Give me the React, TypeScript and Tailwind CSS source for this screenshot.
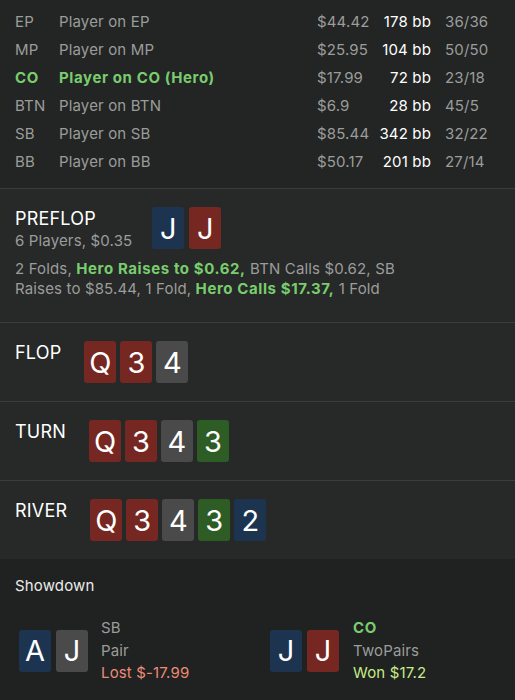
import React from "react";

type Suit = "b" | "r" | "g" | "k";
const suitBg: Record<Suit, string> = {
  b: "bg-[#1d3451]",
  r: "bg-[#762721]",
  g: "bg-[#2d5d25]",
  k: "bg-[#4a4a4a]",
};

function Card({ v, s }: { v: string; s: Suit }) {
  return (
    <div
      className={`w-[32px] h-[42px] rounded-[3px] flex items-center justify-center text-white text-[29px] leading-none tracking-normal ${suitBg[s]}`}
    >
      {v}
    </div>
  );
}

const players = [
  { pos: "EP", name: "Player on EP", price: "$44.42", bb: "178 bb", ratio: "36/36" },
  { pos: "MP", name: "Player on MP", price: "$25.95", bb: "104 bb", ratio: "50/50" },
  { pos: "CO", name: "Player on CO (Hero)", price: "$17.99", bb: "72 bb", ratio: "23/18", hero: true },
  { pos: "BTN", name: "Player on BTN", price: "$6.9", bb: "28 bb", ratio: "45/5" },
  { pos: "SB", name: "Player on SB", price: "$85.44", bb: "342 bb", ratio: "32/22" },
  { pos: "BB", name: "Player on BB", price: "$50.17", bb: "201 bb", ratio: "27/14" },
];

const heroCls = "text-[#79cd6e] font-bold tracking-[0.6px]";

function Street({ label, cards }: { label: string; cards: [string, Suit][] }) {
  return (
    <div className="border-t border-[#3a3d3b] bg-[#262927] px-[15px] pt-[18px] pb-[18px] flex items-start gap-[23px]">
      <div className="text-[18px] leading-[24px] text-white tracking-[0.2px]">{label}</div>
      <div className="flex gap-[4px]">
        {cards.map(([v, s], i) => (
          <Card key={i} v={v} s={s} />
        ))}
      </div>
    </div>
  );
}

export default function App() {
  return (
    <div
      className="w-[515px] h-[700px] overflow-hidden bg-[#1f2220] text-[15px] tracking-[0.15px]"
      style={{ fontFamily: "Inter, 'Noto Sans', sans-serif" }}
    >
      {/* players */}
      <div className="bg-[#222523] px-[15px] pt-[8px] pb-[12px]">
        {players.map((p) => (
          <div key={p.pos} className="flex items-center h-[28px] whitespace-nowrap">
            <div className={`w-[44px] ${p.hero ? heroCls : "text-[#9c9c9c]"}`}>{p.pos}</div>
            <div className={`flex-1 ${p.hero ? heroCls : "text-[#9c9c9c]"}`}>{p.name}</div>
            <div className="w-[64px] text-[#9c9c9c]">{p.price}</div>
            <div className="w-[50px] flex justify-end text-white">
              <span className="whitespace-nowrap">{p.bb}</span>
            </div>
            <div className="w-[55px] ml-[14px] text-[#9c9c9c]">{p.ratio}</div>
          </div>
        ))}
      </div>

      {/* preflop */}
      <div className="border-t border-[#3a3d3b] bg-[#262927] px-[15px] pt-[18px] pb-[23px]">
        <div className="flex items-start gap-[20px]">
          <div>
            <div className="text-[18px] leading-[24px] text-white tracking-[0.2px]">PREFLOP</div>
            <div className="leading-[20px] text-[#9c9c9c]">6 Players, $0.35</div>
          </div>
          <div className="flex gap-[5px]">
            <Card v="J" s="b" />
            <Card v="J" s="r" />
          </div>
        </div>
        <div className="mt-[8px] max-w-[415px] leading-[20px] text-[#9c9c9c]">
          2 Folds, <span className={heroCls}>Hero Raises to $0.62,</span> BTN Calls $0.62, SB Raises to $85.44, 1 Fold,{" "}
          <span className={heroCls}>Hero Calls $17.37,</span> 1 Fold
        </div>
      </div>

      <Street label="FLOP" cards={[["Q", "r"], ["3", "r"], ["4", "k"]]} />
      <Street label="TURN" cards={[["Q", "r"], ["3", "r"], ["4", "k"], ["3", "g"]]} />
      <Street label="RIVER" cards={[["Q", "r"], ["3", "r"], ["4", "k"], ["3", "g"], ["2", "b"]]} />

      {/* showdown */}
      <div className="bg-[#1f2220] pt-[17px]">
        <div className="px-[15px] leading-[20px] text-[#ececec]">Showdown</div>
        <div className="flex mt-[21px] pl-[19px]">
          <div className="w-[251px] flex items-center gap-[13px]">
            <div className="flex gap-[5px]">
              <Card v="A" s="b" />
              <Card v="J" s="k" />
            </div>
            <div className="leading-[22.5px]">
              <div className="text-[#9c9c9c]">SB</div>
              <div className="text-[#9c9c9c]">Pair</div>
              <div className="text-[#ee8a78]">Lost $-17.99</div>
            </div>
          </div>
          <div className="flex items-center gap-[14px]">
            <div className="flex gap-[5px]">
              <Card v="J" s="b" />
              <Card v="J" s="r" />
            </div>
            <div className="leading-[22.5px]">
              <div className={heroCls}>CO</div>
              <div className="text-[#9c9c9c]">TwoPairs</div>
              <div className="text-[#c6ec88]">Won $17.2</div>
            </div>
          </div>
        </div>
      </div>
    </div>
  );
}
